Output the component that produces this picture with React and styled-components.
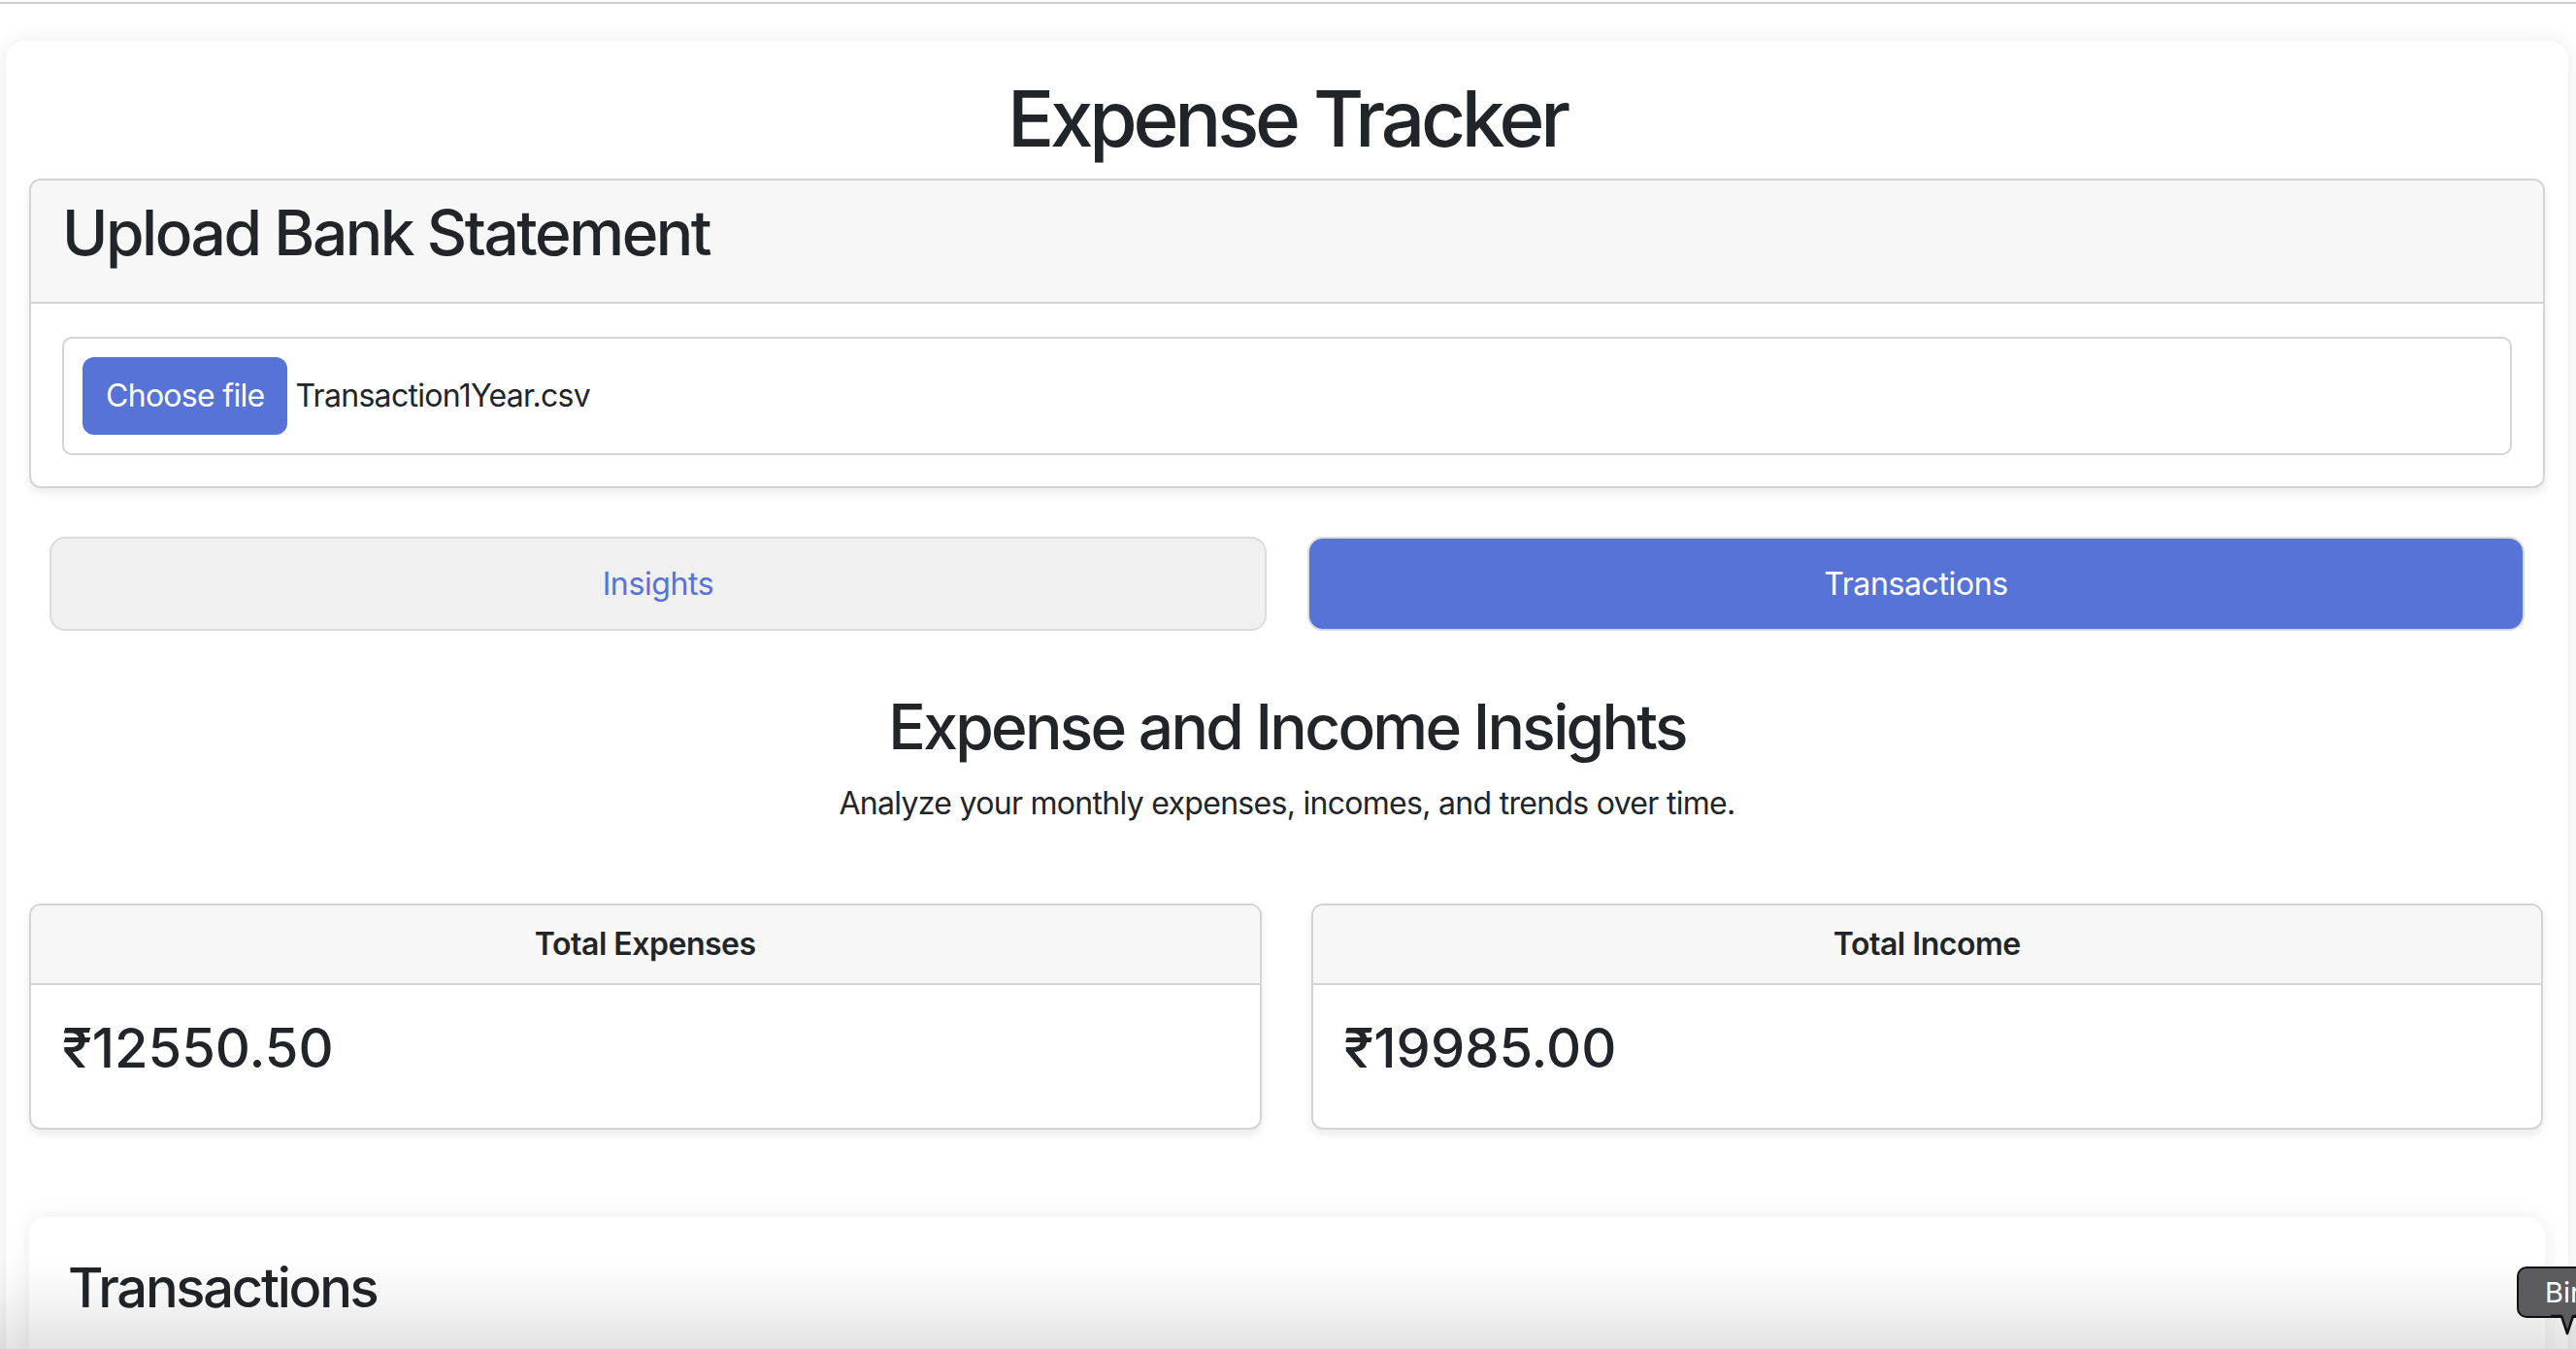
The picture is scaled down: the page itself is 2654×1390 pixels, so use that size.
import React from "react";
import styled, { createGlobalStyle } from "styled-components";

const GlobalStyle = createGlobalStyle`
  html, body {
    margin: 0;
    padding: 0;
    overflow: hidden;
    background: #ffffff;
  }
  body {
    font-family: Inter, "Liberation Sans", Arial, sans-serif;
    color: #212529;
    -webkit-font-smoothing: antialiased;
  }
  * { box-sizing: border-box; }
`;

const BLUE = "#5773d8";

const TopRule = styled.div`
  height: 2px;
  margin-top: 2px;
  background: #cfcfcf;
`;

const Page = styled.div`
  padding: 38px 8px 0 6px;
`;

const Shell = styled.main`
  background: #fff;
  border-radius: 20px;
  box-shadow: 0 0 22px rgba(0, 0, 0, 0.09);
  padding: 32px 24px 60px;
`;

const Title = styled.h1`
  margin: 0 0 14px;
  text-align: center;
  font-size: 80px;
  font-weight: 500;
  line-height: 1.2;
  letter-spacing: -0.053em;
`;

const Card = styled.section`
  background: #fff;
  border: 2px solid #d4d4d4;
  border-radius: 12px;
  overflow: hidden;
  box-shadow: 0 5px 10px rgba(0, 0, 0, 0.08);
`;

const CardHeader = styled.header`
  background: #f7f7f7;
  border-bottom: 2px solid #d4d4d4;
  padding: 16px 32px;
  text-align: ${(p) => (p.$center ? "center" : "left")};
`;

const SectionHeading = styled.h2`
  margin: 0 0 16px;
  font-size: 64px;
  font-weight: 500;
  line-height: 1.2;
  letter-spacing: -0.038em;
`;

const CardBody = styled.div`
  padding: ${(p) => p.$pad || "32px"};
`;

const FileBox = styled.label`
  display: flex;
  align-items: center;
  gap: 8px;
  border: 2px solid #d1d5da;
  border-radius: 10px;
  padding: 19px;
  font-size: 32px;
  letter-spacing: -0.022em;
`;

const FileButton = styled.span`
  display: inline-flex;
  align-items: center;
  justify-content: center;
  height: 80px;
  padding: 0 24px;
  border-radius: 12px;
  background: ${BLUE};
  color: #fff;
  font-size: 32px;
`;

const FileName = styled.span`
  color: #212529;
`;

const TabRow = styled.nav`
  display: flex;
  margin-top: 50px;
`;

const TabButton = styled.button`
  flex: 1;
  margin: 0 21px;
  height: 97px;
  border-radius: 16px;
  border: 2px solid #dcdcdc;
  background: ${(p) => (p.$active ? BLUE : "#f0f0f0")};
  color: ${(p) => (p.$active ? "#ffffff" : BLUE)};
  font-family: inherit;
  font-size: 32px;
  font-weight: 400;
  letter-spacing: -0.012em;
  cursor: pointer;
`;

const Insights = styled.section`
  padding-top: 61px;
  text-align: center;
`;

const InsightsTitle = styled.h2`
  margin: 0 0 16px;
  font-size: 64px;
  font-weight: 500;
  line-height: 1.2;
  letter-spacing: -0.042em;
`;

const Lead = styled.p`
  margin: 0;
  font-size: 32px;
  line-height: 1.5;
  letter-spacing: -0.022em;
`;

const StatGrid = styled.div`
  display: grid;
  grid-template-columns: 1fr 1fr;
  gap: 51px;
  margin-top: 79px;
  margin-right: 2px;
  text-align: left;
`;

const StatLabel = styled.div`
  font-size: 32px;
  font-weight: 600;
  line-height: 48px;
  letter-spacing: -0.015em;
`;

const Amount = styled.h3`
  margin: 0 0 16px;
  font-size: 56px;
  font-weight: 500;
  line-height: 1.2;
  letter-spacing: 0;
`;

const TxCard = styled.section`
  margin-top: 90px;
  background: #fff;
  border-radius: 18px;
  box-shadow: 0 0 22px rgba(0, 0, 0, 0.08);
  padding: 40px 40px;
  min-height: 400px;
`;

const TxHeading = styled.h3`
  margin: 0;
  font-size: 56px;
  font-weight: 500;
  line-height: 1.2;
  letter-spacing: -0.04em;
`;

const BottomFade = styled.div`
  position: fixed;
  left: 0;
  right: 0;
  bottom: 0;
  height: 95px;
  pointer-events: none;
  background: linear-gradient(
    to bottom,
    rgba(0, 0, 0, 0) 0%,
    rgba(0, 0, 0, 0.04) 45%,
    rgba(0, 0, 0, 0.11) 100%
  );
  z-index: 5;
`;

const Tooltip = styled.div`
  position: fixed;
  left: 2593px;
  top: 1305px;
  z-index: 10;
  height: 53px;
  display: flex;
  align-items: center;
  padding: 0 40px 0 27px;
  background: #5c5c60;
  color: #fff;
  border: 2px solid #111;
  border-radius: 10px;
  font-size: 29px;
  white-space: nowrap;
`;

const TooltipTail = styled.svg`
  position: absolute;
  left: 33px;
  top: 47px;
  overflow: visible;
`;

const Stat = ({ label, value }) => (
  <Card>
    <CardHeader $center>
      <StatLabel>{label}</StatLabel>
    </CardHeader>
    <CardBody>
      <Amount>{value}</Amount>
    </CardBody>
  </Card>
);

export default function App() {
  return (
    <>
      <GlobalStyle />
      <TopRule />
      <Page>
        <Shell>
          <Title>Expense Tracker</Title>

          <Card>
            <CardHeader>
              <SectionHeading>Upload Bank Statement</SectionHeading>
            </CardHeader>
            <CardBody $pad="34px 32px 32px">
              <FileBox>
                <FileButton>Choose file</FileButton>
                <FileName>Transaction1Year.csv</FileName>
              </FileBox>
            </CardBody>
          </Card>

          <TabRow>
            <TabButton>Insights</TabButton>
            <TabButton $active>Transactions</TabButton>
          </TabRow>

          <Insights>
            <InsightsTitle>Expense and Income Insights</InsightsTitle>
            <Lead>Analyze your monthly expenses, incomes, and trends over time.</Lead>
            <StatGrid>
              <Stat label="Total Expenses" value="₹12550.50" />
              <Stat label="Total Income" value="₹19985.00" />
            </StatGrid>
          </Insights>

          <TxCard>
            <TxHeading>Transactions</TxHeading>
          </TxCard>
        </Shell>
      </Page>
      <BottomFade />
      <Tooltip>
        Bir
        <TooltipTail width="34" height="24" viewBox="0 0 34 24">
          <path d="M0 2 L11 2 L17 20 L23 2 L34 2" fill="#5c5c60" stroke="#111" strokeWidth="2.5" strokeLinejoin="round" />
        </TooltipTail>
      </Tooltip>
    </>
  );
}
